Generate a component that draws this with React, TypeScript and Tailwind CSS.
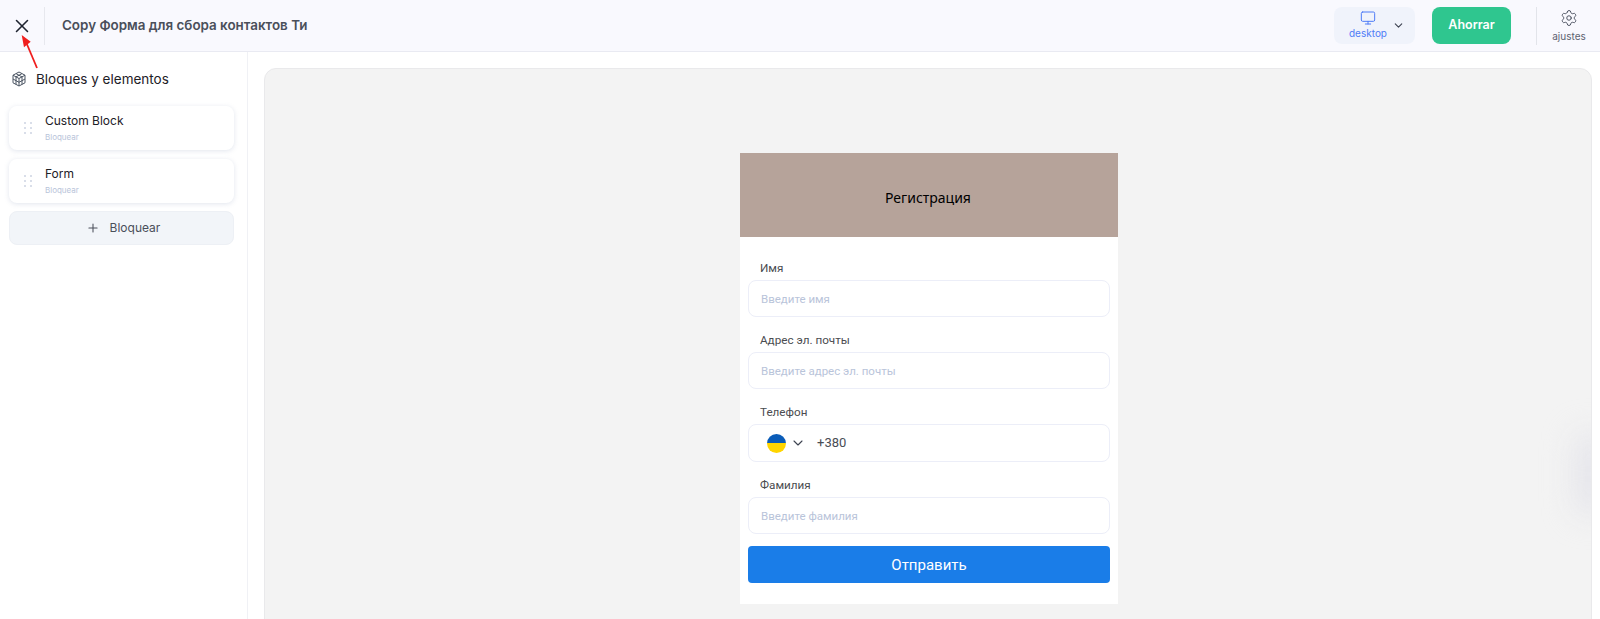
import { ChevronDown, Monitor, Plus, Settings, X } from 'lucide-react'

const blocks = ['Custom Block', 'Form']

function DragHandle() {
  return (
    <svg className="shrink-0" width="8" height="12" viewBox="0 0 8 12" fill="#a9b4cc" aria-hidden="true">
      {[1, 6, 11].map((y) => (
        <g key={y}>
          <circle cx="1" cy={y} r="0.8" />
          <circle cx="7" cy={y} r="0.8" />
        </g>
      ))}
    </svg>
  )
}

function CubeIcon() {
  return (
    <svg width="16" height="16" viewBox="0 0 16 16" fill="none" stroke="#4b5563" strokeWidth="1" strokeLinejoin="round" aria-hidden="true">
      <path d="M8 1 14 4.2v7.6L8 15l-6-3.2V4.2z" />
      <path d="M2 4.2 8 7.5l6-3.3M8 7.5V15" />
      <path d="M5 2.6l6 3.3v7.5M11 2.6 5 5.9v7.5M2 8l6 3.3L14 8" />
    </svg>
  )
}

function Field({ label, placeholder }: { label: string; placeholder: string }) {
  return (
    <div>
      <p className="pl-[12px] text-[11.7px] leading-[18px] text-[#4a4c50]">{label}</p>
      <div className="mt-[3px] flex h-[37px] items-center rounded-lg border border-[#eceef8] bg-white px-[12px] pt-[2px] text-[11.5px] text-[#b9c4da]">
        {placeholder}
      </div>
    </div>
  )
}

export default function App() {
  return (
    <div className="relative flex h-[619px] w-[1600px] flex-col overflow-hidden bg-white font-['Inter',sans-serif]">
      <header className="flex h-[52px] shrink-0 items-center border-b border-[#e9eaf2] bg-[#f9f9fe]">
        <div className="flex h-[38px] w-[45px] items-center justify-center border-r border-[#e7e8ee]">
          <X size={22} strokeWidth={1.7} className="text-[#1f2430]" />
        </div>
        <h1 className="ml-[17px] text-[13.4px] font-semibold text-[#4a4f5a]">Copy Форма для сбора контактов Ти</h1>

        <div className="ml-auto flex h-[37px] w-[81px] items-center rounded-lg bg-[#f0f3fb] pl-[14px]">
          <div className="flex w-[40px] flex-col items-center">
            <Monitor size={16} strokeWidth={1.5} className="text-[#4f7cf7]" />
            <span className="text-[10px] leading-[15px] text-[#4f7cf7]">desktop</span>
          </div>
          <ChevronDown size={13} strokeWidth={2} className="ml-[4px] text-[#3c4250]" />
        </div>
        <button className="ml-[17px] h-[37px] w-[79px] rounded-lg bg-[#2fc68f] text-[12.5px] font-semibold text-white">Ahorrar</button>
        <div className="ml-[25px] flex h-[38px] w-[64px] flex-col items-center justify-center border-l border-[#e2e4ea] pl-px">
          <Settings size={18} strokeWidth={1.3} className="text-[#4b5160]" />
          <span className="mt-[2px] text-[10px] leading-[14px] text-[#5d6270]">ajustes</span>
        </div>
      </header>

      <div className="flex min-h-0 flex-1">
        <aside className="w-[248px] shrink-0 border-r border-[#f0f1f5] pr-[13px] pl-[9px]">
          <div className="flex h-[54px] items-center gap-[9px] pl-[2px]">
            <CubeIcon />
            <h2 className="text-[13.5px] font-normal text-[#1d2027]">Bloques y elementos</h2>
          </div>
          <div className="flex flex-col gap-[9px]">
            {blocks.map((name) => (
              <div key={name} className="flex h-[44px] items-center rounded-lg bg-white pl-[15px] shadow-[0_1px_5px_rgba(120,135,175,0.22)]">
                <DragHandle />
                <div className="ml-[13px]">
                  <p className="text-xs font-normal leading-[16px] text-[#1d2027]">{name}</p>
                  <p className="mt-[2px] text-[8px] leading-[12px] text-[#b9c4da]">Bloquear</p>
                </div>
              </div>
            ))}
            <button className="-mt-px flex h-[34px] items-center justify-center gap-[10px] rounded-lg border border-[#edf0f5] bg-[#f2f5f9] pl-[3px] text-xs font-normal text-[#4a4f5a]">
              <Plus size={14} strokeWidth={1.8} />
              Bloquear
            </button>
          </div>
        </aside>

        <main className="min-w-0 flex-1 pt-[16px] pr-[8px] pl-[16px]">
          <div className="relative h-[620px] overflow-hidden rounded-t-xl border border-[#e9e9eb] bg-[#f3f3f3] pt-[84px] pl-[2px]">
            <div className="mx-auto w-[378px] bg-white font-['Roboto',sans-serif]">
              <div className="flex h-[84px] items-center justify-center bg-[#b6a39a] pt-[6px] pr-[2px] font-['Noto_Sans',sans-serif] text-sm text-black">Регистрация</div>
              <div className="flex flex-col gap-[14px] px-[8px] pt-[22px] pb-[21px]">
                <Field label="Имя" placeholder="Введите имя" />
                <Field label="Адрес эл. почты" placeholder="Введите адрес эл. почты" />
                <div>
                  <p className="pl-[12px] text-[11.7px] leading-[18px] text-[#4a4c50]">Телефон</p>
                  <div className="mt-[3px] flex h-[38px] items-center rounded-lg border border-[#eceef8] bg-white pl-[18px] text-[13px] text-[#4a4d55]">
                    <span className="flex h-[19px] w-[19px] flex-col overflow-hidden rounded-full">
                      <span className="h-1/2 bg-[#0a5cb8]" />
                      <span className="h-1/2 bg-[#ffd500]" />
                    </span>
                    <ChevronDown size={16} strokeWidth={1.6} className="ml-[4px] text-[#3c4250]" />
                    <span className="ml-[11px]">+380</span>
                  </div>
                </div>
                <Field label="Фамилия" placeholder="Введите фамилия" />
                <button className="-mt-[2px] h-[37px] rounded-[4px] bg-[#1a7de8] pt-[1px] text-[15px] font-normal text-white">Отправить</button>
              </div>
            </div>
            {/* faint glow at the right edge */}
            <div className="absolute top-[365px] -right-[14px] h-[80px] w-[28px] rounded-full bg-[#e2e2e9] blur-lg" />
          </div>
        </main>
      </div>

      {/* red annotation arrow */}
      <svg className="absolute top-[33px] left-[18px]" width="22" height="36" viewBox="0 0 22 36" aria-hidden="true">
        <path d="M19 35 8 9" stroke="#f01e1e" strokeWidth="1.8" fill="none" />
        <path d="M3.7 2 12.7 8.7 6 14.3z" fill="#f01e1e" />
      </svg>
    </div>
  )
}
